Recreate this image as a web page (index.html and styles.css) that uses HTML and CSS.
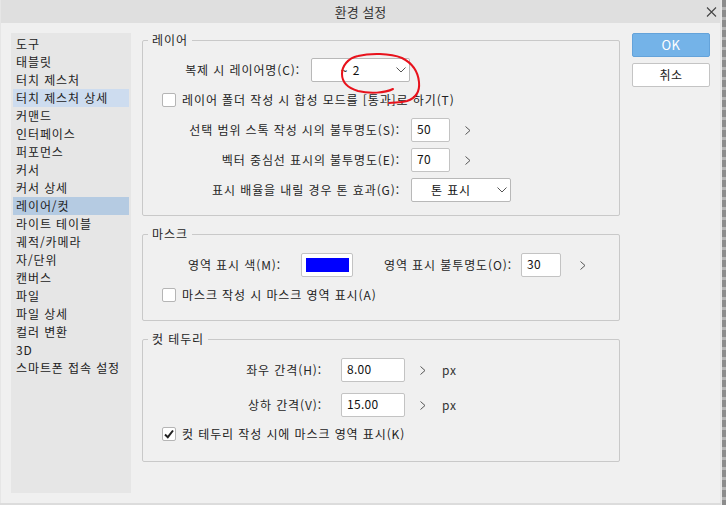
FILE: index.html
```html
<!DOCTYPE html>
<html lang="ko">
<head>
<meta charset="utf-8">
<title>환경 설정</title>
<link rel="stylesheet" href="styles.css">
</head>
<body>
<div class="screen">
  <div class="window">
    <div class="titlebar">
      <span></span>
      <span class="title">환경 설정</span>
      <span class="close">
        <svg width="11" height="10" viewBox="0 0 11 10"><path d="M1 0.5 L10 9.5 M10 0.5 L1 9.5" stroke="#444" stroke-width="1.1" fill="none"/></svg>
      </span>
    </div>
    <div class="main">
      <ul class="nav">
        <li>도구</li>
        <li>태블릿</li>
        <li>터치 제스처</li>
        <li class="hover">터치 제스처 상세</li>
        <li>커맨드</li>
        <li>인터페이스</li>
        <li>퍼포먼스</li>
        <li>커서</li>
        <li>커서 상세</li>
        <li class="active">레이어/컷</li>
        <li>라이트 테이블</li>
        <li>궤적/카메라</li>
        <li>자/단위</li>
        <li>캔버스</li>
        <li>파일</li>
        <li>파일 상세</li>
        <li>컬러 변환</li>
        <li>3D</li>
        <li>스마트폰 접속 설정</li>
      </ul>

      <div class="panes">
        <fieldset class="group group-layer">
          <legend>레이어</legend>
          <div class="row">
            <label class="lbl w-157">복제 시 레이어명(C):</label>
            <div class="select sel-name"><span class="sel-text">~ 2</span><span class="caret"><svg width="10" height="6" viewBox="0 0 10 6"><path d="M0.5 0.5 L5 5 L9.5 0.5" stroke="#555" fill="none"/></svg></span></div>
          </div>
          <div class="row check-row">
            <span class="checkbox"></span>
            <span class="check-text">레이어 폴더 작성 시 합성 모드를 [통과]로 하기(T)</span>
          </div>
          <div class="row">
            <label class="lbl w-257">선택 범위 스톡 작성 시의 불투명도(S):</label>
            <div class="input in-39">50</div>
            <span class="chev chev-15"><svg width="6" height="9" viewBox="0 0 6 9"><path d="M0.5 0.5 L5 4.5 L0.5 8.5" stroke="#555" fill="none"/></svg></span>
          </div>
          <div class="row">
            <label class="lbl w-257">벡터 중심선 표시의 불투명도(E):</label>
            <div class="input in-39">70</div>
            <span class="chev chev-15"><svg width="6" height="9" viewBox="0 0 6 9"><path d="M0.5 0.5 L5 4.5 L0.5 8.5" stroke="#555" fill="none"/></svg></span>
          </div>
          <div class="row">
            <label class="lbl w-257">표시 배율을 내릴 경우 톤 효과(G):</label>
            <div class="select sel-tone"><span class="sel-text">톤 표시</span><span class="caret"><svg width="10" height="6" viewBox="0 0 10 6"><path d="M0.5 0.5 L5 5 L9.5 0.5" stroke="#555" fill="none"/></svg></span></div>
          </div>
        </fieldset>

        <fieldset class="group group-mask">
          <legend>마스크</legend>
          <div class="row">
            <label class="lbl w-138">영역 표시 색(M):</label>
            <div class="swatch"><span class="swatch-fill"></span></div>
            <label class="lbl w-159">영역 표시 불투명도(O):</label>
            <div class="input in-40 in-gap9">30</div>
            <span class="chev chev-19"><svg width="6" height="9" viewBox="0 0 6 9"><path d="M0.5 0.5 L5 4.5 L0.5 8.5" stroke="#555" fill="none"/></svg></span>
          </div>
          <div class="row check-row">
            <span class="checkbox"></span>
            <span class="check-text">마스크 작성 시 마스크 영역 표시(A)</span>
          </div>
        </fieldset>

        <fieldset class="group group-cut">
          <legend>컷 테두리</legend>
          <div class="row">
            <label class="lbl w-179">좌우 간격(H):</label>
            <div class="input in-64">8.00</div>
            <span class="chev chev-15"><svg width="6" height="9" viewBox="0 0 6 9"><path d="M0.5 0.5 L5 4.5 L0.5 8.5" stroke="#555" fill="none"/></svg></span>
            <span class="unit">px</span>
          </div>
          <div class="row row-gap11">
            <label class="lbl w-179">상하 간격(V):</label>
            <div class="input in-64">15.00</div>
            <span class="chev chev-15"><svg width="6" height="9" viewBox="0 0 6 9"><path d="M0.5 0.5 L5 4.5 L0.5 8.5" stroke="#555" fill="none"/></svg></span>
            <span class="unit">px</span>
          </div>
          <div class="row check-row row-gap5">
            <span class="checkbox checked"><svg width="12" height="12" viewBox="0 0 12 12"><path d="M2 6.5 L4.8 9.2 L10 2.5" stroke="#222" stroke-width="2" fill="none"/></svg></span>
            <span class="check-text">컷 테두리 작성 시에 마스크 영역 표시(K)</span>
          </div>
        </fieldset>
      </div>

      <div class="actions">
        <button class="btn btn-primary">OK</button>
        <button class="btn">취소</button>
      </div>
    </div>
  </div>
  <div class="edge"></div>

  <svg class="ink" width="726" height="505" viewBox="0 0 726 505">
    <path d="M393,89 C385,93 370,94 358,91 C348,88 342,82 342,74 C342,66 348,58 358,56 C370,53 390,53 402,58 C412,63 418,72 419,82 C420,92 416,98 407,101 C400,103 394,102 389,103" stroke="#e8121c" stroke-width="2" fill="none" stroke-linecap="round"/>
  </svg>
</div>
</body>
</html>
```

FILE: styles.css
```css
* { box-sizing: border-box; }

html, body {
  margin: 0;
  padding: 0;
}

body {
  font-family: "Noto Sans CJK KR", "Noto Sans", sans-serif;
  font-size: 12px;
  line-height: 16px;
  letter-spacing: 0.9px;
  color: #222;
  background: #dcdcdc;
}

.screen {
  position: relative;
  display: flex;
  width: 726px;
  height: 505px;
  background: #dcdcdc;
  overflow: hidden;
}

.window {
  width: 721px;
  height: 503px;
  background: #f0f0f0;
  border-left: 1px solid #e6e6e6;
  border-right: 1px solid #e4e4e4;
  flex: none;
}

.edge {
  width: 5px;
  height: 505px;
  background: repeating-linear-gradient(180deg, #8c8c8c 0 7px, #b4b4b4 7px 10px);
  border-left: 1px solid #e8e8e8;
}

/* title bar */
.titlebar {
  height: 23px;
  background: #dfdfdf;
  display: grid;
  grid-template-columns: 1fr auto 1fr;
  align-items: center;
}

.title {
  font-size: 13px;
  letter-spacing: 0;
  color: #333;
  padding-top: 1px;
}

.close {
  justify-self: end;
  margin-right: 3px;
  display: flex;
  padding-top: 1px;
}

/* body */
.main {
  display: flex;
  align-items: flex-start;
  padding: 9px 0 0 10px;
}

.nav {
  list-style: none;
  margin: 1px 0 0;
  padding: 2px 2px;
  width: 120px;
  height: 460px;
  background: #e6e6e6;
  flex: none;
}

.nav li {
  height: 18px;
  line-height: 18px;
  padding-left: 3px;
  color: #222;
  white-space: nowrap;
}

.nav li.hover { background: #cddcef; }
.nav li.active { background: #b5cbe2; }

.panes {
  margin-left: 11px;
  width: 478px;
  display: flex;
  flex-direction: column;
  gap: 10px;
  flex: none;
}

.group {
  margin: 0;
  padding: 10px 0 13px;
  border: 1px solid #c9c9c9;
  border-radius: 2px;
  min-width: 0;
  display: flex;
  flex-direction: column;
  gap: 6px;
}

.group-mask { padding: 11px 0 13px; }
.group-cut { padding: 11px 0 15px; gap: 0; }

.group legend {
  margin-left: 5px;
  padding: 0 4px;
  line-height: 16px;
  color: #262626;
}

.row {
  display: flex;
  align-items: center;
  height: 24px;
}

.row-gap11 { margin-top: 11px; }
.row-gap5 { margin-top: 5px; }

.lbl {
  text-align: right;
  white-space: nowrap;
  color: #262626;
  flex: none;
}

.w-157 { width: 157px; margin-right: 11px; }
.w-257 { width: 257px; margin-right: 11px; }
.w-138 { width: 138px; margin-right: 20px; }
.w-159 { width: 159px; }
.w-179 { width: 179px; margin-right: 19px; }

.input {
  height: 24px;
  background: #fff;
  border: 1px solid #c3c3c3;
  border-radius: 2px;
  padding-left: 5px;
  line-height: 20px;
  letter-spacing: 0.3px;
  color: #111;
  flex: none;
}

.in-39 { width: 39px; }
.in-40 { width: 40px; }
.in-64 { width: 64px; }
.in-gap9 { margin-left: 9px; }

.select {
  height: 24px;
  background: #fff;
  border: 1px solid #b8b8b8;
  border-radius: 2px;
  display: flex;
  align-items: center;
  flex: none;
}

.sel-name { width: 99px; }
.sel-tone { width: 100px; }

.sel-text {
  flex: 1;
  text-align: center;
  color: #111;
}

.caret {
  width: 20px;
  display: flex;
  justify-content: flex-end;
  padding-right: 3px;
}

.chev {
  display: flex;
  flex: none;
}

.chev-15 { margin-left: 15px; }
.chev-19 { margin-left: 19px; }

.unit {
  margin-left: 16px;
  color: #333;
}

.check-row {
  padding-left: 19px;
}

.checkbox {
  width: 14px;
  height: 14px;
  background: #fff;
  border: 1px solid #b5b5b5;
  border-radius: 2px;
  margin-right: 6px;
  flex: none;
  display: flex;
  align-items: center;
  justify-content: center;
}

.check-text {
  white-space: nowrap;
  color: #222;
}

.swatch {
  width: 52px;
  height: 24px;
  background: #fff;
  border: 1px solid #c3c3c3;
  border-radius: 2px;
  padding: 4px 3px 4px 4px;
  flex: none;
}

.swatch-fill {
  display: block;
  width: 100%;
  height: 100%;
  background: #0000ff;
}

/* dialog buttons */
.actions {
  margin-left: 12px;
  margin-top: 1px;
  width: 78px;
  display: flex;
  flex-direction: column;
  gap: 6px;
  flex: none;
}

.btn {
  height: 24px;
  width: 78px;
  font-family: inherit;
  font-size: 12px;
  line-height: 16px;
  letter-spacing: 0.5px;
  background: #fff;
  border: 1px solid #c4c4c4;
  border-radius: 2px;
  color: #222;
  padding: 0;
}

.btn-primary {
  background: #74b3e8;
  border-color: #64a3da;
  color: #fff;
  font-size: 13px;
}

.ink {
  position: absolute;
  left: 0;
  top: 0;
  pointer-events: none;
}
```
